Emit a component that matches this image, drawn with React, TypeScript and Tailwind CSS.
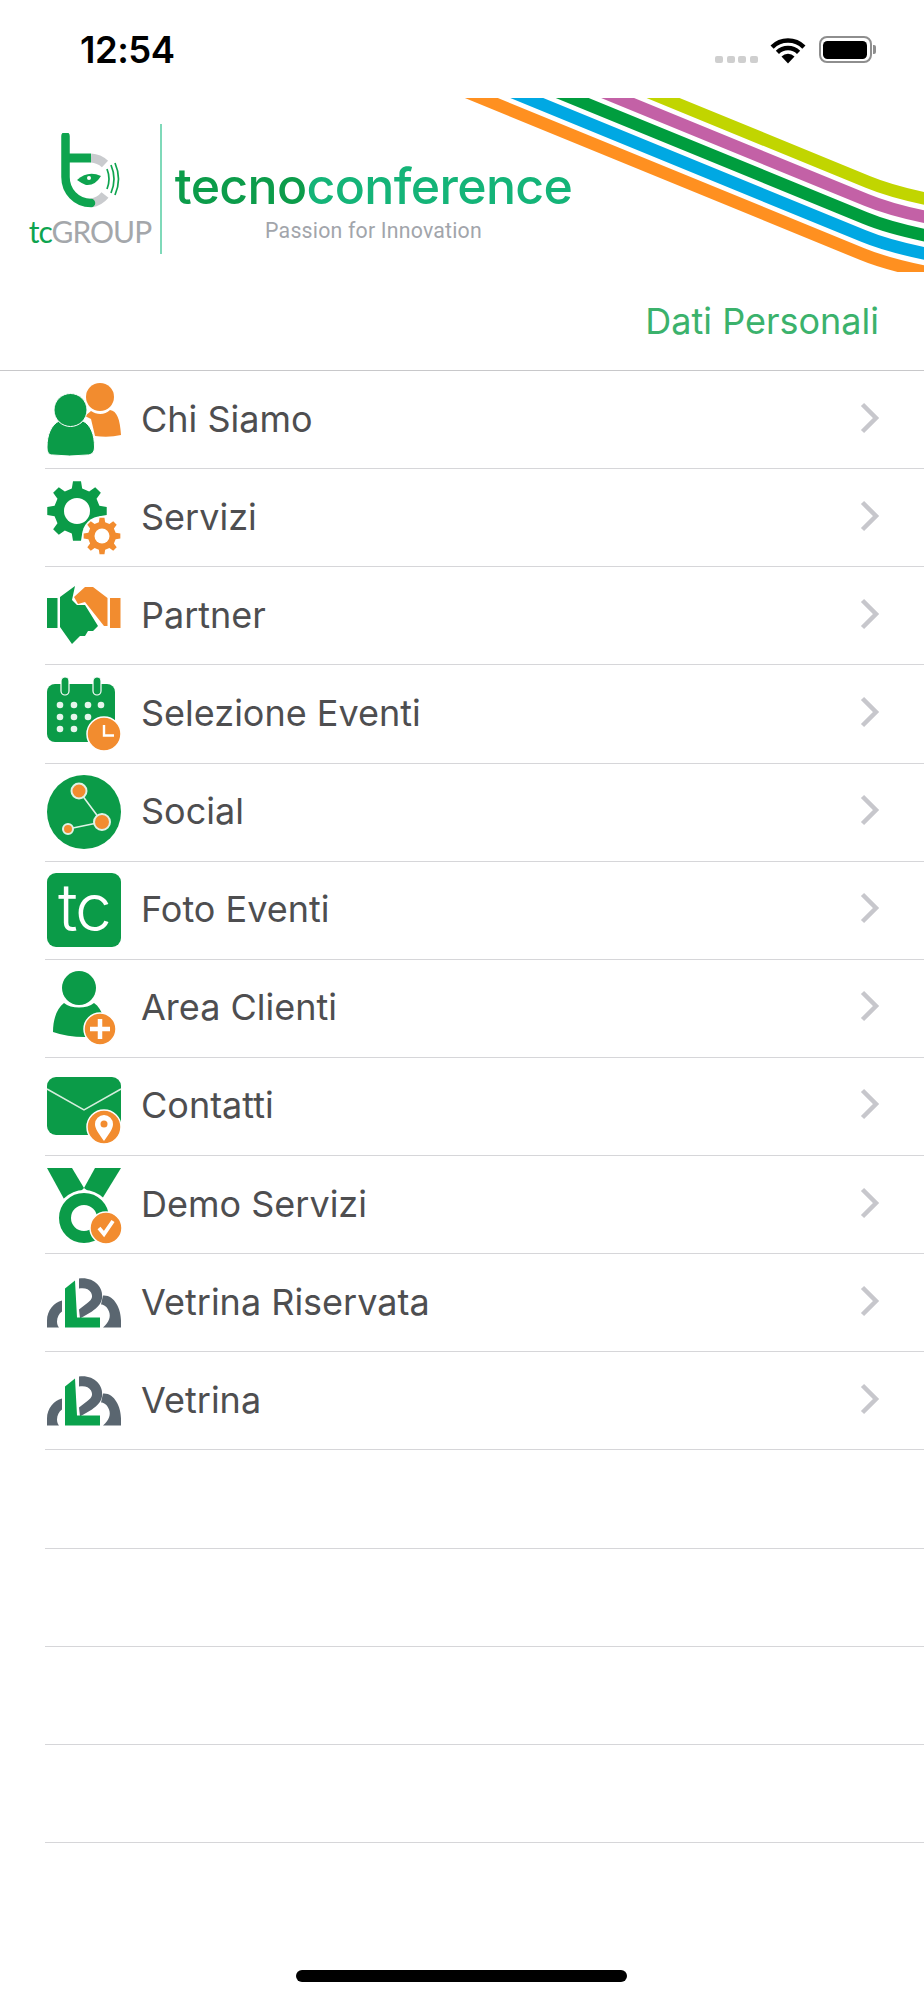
// App.tsx
const GREEN = '#0b9b48'
const ORANGE = '#f28c2f'

function gearPath(cx: number, cy: number, outer: number, inner: number, teeth: number) {
  const pts: string[] = []
  const step = (Math.PI * 2) / teeth
  for (let i = 0; i < teeth; i++) {
    const a = i * step - Math.PI / 2
    const w = step * 0.2
    const seq: [number, number][] = [
      [inner, a - w * 1.45],
      [outer, a - w * 0.85],
      [outer, a + w * 0.85],
      [inner, a + w * 1.45],
    ]
    seq.forEach(([r, t]) => pts.push(`${(cx + r * Math.cos(t)).toFixed(2)} ${(cy + r * Math.sin(t)).toFixed(2)}`))
  }
  return 'M' + pts.join('L') + 'Z'
}

function PeopleIcon() {
  return (
    <>
      <circle cx="53" cy="14" r="14" fill={ORANGE} />
      <path d="M44 28C50 32 58 32 63 27C70 28 73 36 74 52Q62 55 48 53L44 36L38 33Z" fill={ORANGE} />
      <path d="M12 38C18 44 30 44 36 38C44 42 47.500 52 47.500 64C47.500 70 44 72 40 72Q22 74 6 72C2 72 0 70 0 64C0 52 4 42 12 38Z" fill={GREEN} stroke="#fff" strokeWidth="1" />
      <circle cx="23.500" cy="27" r="16.500" fill={GREEN} stroke="#fff" strokeWidth="1" />
    </>
  )
}

function GearsIcon() {
  return (
    <>
      <path d={gearPath(30, 30, 30, 23, 8)} fill={GREEN} />
      <circle cx="30" cy="30" r="13" fill="#fff" />
      <circle cx="55" cy="55" r="20" fill="#fff" />
      <path d={gearPath(55, 55, 18.500, 14, 8)} fill={ORANGE} />
      <circle cx="55" cy="55" r="7.500" fill="#fff" />
    </>
  )
}

function HandshakeIcon() {
  return (
    <g transform="translate(0 6)">
      <rect x="0" y="13" width="10.500" height="30" fill={GREEN} />
      <rect x="63" y="13" width="10.500" height="30" fill={ORANGE} />
      <path d="M13 12L28 1L25 15L30 20H38L51 41L46 46L41 46L38 51L33 51L25 59L13 42Z" fill={GREEN} />
      <path d="M27 12L38 2H46L60.500 13V41H57L38 17L31 19Z" fill={ORANGE} />
    </g>
  )
}

function CalendarIcon() {
  const dots = [
    [13, 28], [27, 28], [41, 28], [54, 28],
    [13, 40], [27, 40], [41, 40],
    [13, 52], [27, 52],
  ]
  return (
    <>
      <rect x="0" y="7" width="68" height="58" rx="8" fill={GREEN} />
      <rect x="14" y="0" width="8" height="18" rx="4" fill={GREEN} stroke="#fff" strokeWidth="1.200" />
      <rect x="46" y="0" width="8" height="18" rx="4" fill={GREEN} stroke="#fff" strokeWidth="1.200" />
      {dots.map(([x, y]) => (
        <circle key={`${x}-${y}`} cx={x} cy={y} r="3.300" fill="#e6f5ec" />
      ))}
      <circle cx="57" cy="57" r="17" fill={ORANGE} stroke="#fff" strokeWidth="1.500" />
      <path d="M57 48V58.500H67" fill="none" stroke="#fff" strokeWidth="2.400" />
    </>
  )
}

function SocialIcon() {
  return (
    <>
      <circle cx="37" cy="37" r="37" fill={GREEN} />
      <path d="M32 16L55 47L21 54" fill="none" stroke="#dff3e6" strokeWidth="1.600" />
      <circle cx="32" cy="16" r="7.500" fill={ORANGE} stroke="#dff3e6" strokeWidth="2" />
      <circle cx="55" cy="47" r="8" fill={ORANGE} stroke="#dff3e6" strokeWidth="2" />
      <circle cx="21" cy="54" r="5" fill={ORANGE} stroke="#dff3e6" strokeWidth="2" />
    </>
  )
}

function TcIcon() {
  return (
    <>
      <rect x="0" y="0" width="74" height="74" rx="9" fill={GREEN} />
      <text x="37" y="58" textAnchor="middle" fontFamily="Inter, sans-serif" fontSize="66" fontWeight="300" letterSpacing="-2" fill="#fff">
        tc
      </text>
    </>
  )
}

function ClientIcon() {
  return (
    <>
      <circle cx="32" cy="17" r="17" fill={GREEN} />
      <path d="M17 32C24 38 40 38 47 32C53 36 57 44 58 56L38 66Q20 66 6 61C6 48 10 37 17 32Z" fill={GREEN} />
      <circle cx="53" cy="58" r="16" fill={ORANGE} stroke="#fff" strokeWidth="1.500" />
      <path d="M53 48V68M43 58H63" stroke="#fff" strokeWidth="4.500" />
    </>
  )
}

function MailIcon() {
  return (
    <>
      <rect x="0" y="8" width="74" height="58" rx="9" fill={GREEN} />
      <path d="M0 20L37 41L74 20" fill="none" stroke="#d5eedd" strokeWidth="1.500" />
      <circle cx="57" cy="58" r="17" fill={ORANGE} stroke="#fff" strokeWidth="1.500" />
      <path d="M57 72C52 65 48 60 48 55A9 9 0 0 1 66 55C66 60 62 65 57 72Z" fill="#fff" />
      <circle cx="57" cy="55" r="3.500" fill={ORANGE} />
    </>
  )
}

function MedalIcon() {
  return (
    <>
      <path d="M0 0H25L37 20L33 24L17 31Z" fill={GREEN} />
      <path d="M48 0H74L55 31L41 23L37 20Z" fill={GREEN} />
      <circle cx="37" cy="50" r="28" fill="#fff" />
      <circle cx="37" cy="50" r="19" fill="none" stroke={GREEN} strokeWidth="12" />
      <circle cx="59" cy="60" r="16" fill={ORANGE} stroke="#fff" strokeWidth="1.500" />
      <path d="M52 60L57 66L66 53" fill="none" stroke="#fff" strokeWidth="3.800" />
    </>
  )
}

function CloudIcon() {
  return (
    <g transform="translate(0 12.500)">
      <path d="M0 49V42C0 32 7 24 15 22V33C12 35 10 39 10 43C10 46 11 48 12 49Z" fill="#5a6670" />
      <path d="M32 0C46 -2 57 8 55 20C54 26 50 29 45 33L33 40L32 31L41 24C45 21 46 18 44 14C42 10 37 9 32 10Z" fill="#5a6670" />
      <path d="M56 17C67 16 74 30 74 42V49H56C62 44 64 38 62 33C60 28 57 26 54 26Z" fill="#5a6670" />
      <path d="M28 2L18 10V49H53V39H30Z" fill="#0aa24c" />
    </g>
  )
}

const rows = [
  { label: 'Chi Siamo', icon: <PeopleIcon /> },
  { label: 'Servizi', icon: <GearsIcon /> },
  { label: 'Partner', icon: <HandshakeIcon /> },
  { label: 'Selezione Eventi', icon: <CalendarIcon /> },
  { label: 'Social', icon: <SocialIcon /> },
  { label: 'Foto Eventi', icon: <TcIcon /> },
  { label: 'Area Clienti', icon: <ClientIcon /> },
  { label: 'Contatti', icon: <MailIcon /> },
  { label: 'Demo Servizi', icon: <MedalIcon /> },
  { label: 'Vetrina Riservata', icon: <CloudIcon /> },
  { label: 'Vetrina', icon: <CloudIcon /> },
]

function Stripes() {
  const colors = ['#c1d500', '#c361a6', '#009d3e', '#00a8e3', '#ff9020']
  return (
    <svg className="absolute left-0 top-0 pointer-events-none" width="924" height="174" viewBox="0 98 924 174">
      {colors.map((c, i) => (
        <path
          key={c}
          d="M380 -18L868 182Q892 192 934 200.500"
          transform={`translate(${-i * 1.5} ${i * 18})`}
          fill="none"
          stroke={c}
          strokeWidth="12.500"
        />
      ))}
    </svg>
  )
}

function GroupMark() {
  return (
    <svg width="62" height="77" viewBox="0 0 62 77" className="block">
      <path d="M32 25A22.500 22.500 0 0 1 46 31" fill="none" stroke="#c9cbce" strokeWidth="9" />
      <path d="M32 70A22.500 22.500 0 0 0 46 62" fill="none" stroke="#c9cbce" strokeWidth="9" />
      <path d="M6.500 3V44C6.500 58 17 70 32 70" fill="none" stroke="#0ea44f" strokeWidth="8.500" strokeLinecap="round" />
      <path d="M6.500 25H32" fill="none" stroke="#0ea44f" strokeWidth="9" />
      <path d="M18 47Q29 37 42 43Q36 53 27 52Q22 50 18 47Z" fill="#0ea44f" />
      <circle cx="30" cy="45" r="2" fill="#fff" />
      <path d="M48 36Q52 46 48 56M52 32Q58 46 52 60M56 30Q63 46 56 62" fill="none" stroke="#0ea44f" strokeWidth="1.700" />
    </svg>
  )
}

export default function App() {
  return (
    <div className="w-[924px] h-[2000px] bg-white flex flex-col font-['Inter',sans-serif] overflow-hidden">
      {/* status bar */}
      <div className="h-[98px] shrink-0 flex items-start">
        <span className="ml-[80px] mt-[31px] text-[36.500px] leading-[38px] font-semibold text-black tracking-[-0.5px] font-['Inter',sans-serif]">12:54</span>
        <div className="ml-auto mr-[48px] flex items-start">
          <div className="flex gap-[3.500px] mt-[56px]">
            <span className="w-[8px] h-[7px] rounded-[2px] bg-[#cfcfcf]" />
            <span className="w-[8px] h-[7px] rounded-[2px] bg-[#cfcfcf]" />
            <span className="w-[8px] h-[7px] rounded-[2px] bg-[#cfcfcf]" />
            <span className="w-[8px] h-[7px] rounded-[2px] bg-[#cfcfcf]" />
          </div>
          <svg width="36" height="27" viewBox="0 0 36 27" className="ml-[12px] mt-[37px]">
            <path d="M18 26.500L11.500 19.500A9.200 9.200 0 0 1 24.500 19.500Z" fill="#000" />
            <path d="M7.400 15.400A15 15 0 0 1 28.600 15.400" fill="none" stroke="#000" strokeWidth="4.500" />
            <path d="M2.100 10.100A22.500 22.500 0 0 1 33.900 10.100" fill="none" stroke="#000" strokeWidth="4.500" />
          </svg>
          <div className="ml-[13px] mt-[36px] flex items-center">
            <div className="w-[53px] h-[27px] rounded-[8px] border-2 border-[#8e8e8e] p-[2.500px]">
              <div className="w-full h-full rounded-[4.500px] bg-black" />
            </div>
            <div className="ml-[1.500px] w-[3px] h-[9px] rounded-r-[2px] bg-[#8e8e8e]" />
          </div>
        </div>
      </div>

      {/* banner */}
      <div className="relative h-[174px] shrink-0 flex items-start">
        <Stripes />
        <div className="ml-[28px] w-[124px] pt-[35px] flex flex-col items-center">
          <GroupMark />
          <div className="mt-[3px] text-[30px] leading-[36px] tracking-[-1px] font-['Lato',sans-serif] whitespace-nowrap">
            <span className="text-[#0ea44f]">tc</span>
            <span className="text-[#a4a7ab]">GROUP</span>
          </div>
        </div>
        <div className="ml-[8px] mt-[26px] w-[2px] h-[130px] bg-[#7fd9b9]" />
        <div className="ml-[14px] mt-[60px] w-[395px] flex flex-col items-center">
          <div className="text-[50px] leading-[56px] font-['Inter',sans-serif] font-medium tracking-[-0.65px] whitespace-nowrap">
            <span className="text-[#0c9c4a]">tecno</span>
            <span className="text-[#14b478]">conference</span>
          </div>
          <div className="text-[21.300px] leading-[24px] text-[#a2a5ab] font-['Roboto',sans-serif] tracking-[0.2px] mt-[5px]">Passion for Innovation</div>
        </div>
      </div>

      {/* dati personali */}
      <div className="h-[99px] shrink-0 border-b border-[#c8c8ca] flex justify-end items-start">
        <button className="mr-[45px] mt-[28px] text-[36px] leading-[42px] text-[#3bb26c]">Dati Personali</button>
      </div>

      {/* menu */}
      <ul className="flex flex-col">
        {rows.map(r => (
          <li key={r.label} className="ml-[45px] h-[98.130px] shrink-0 border-b border-[#d6d6d9] flex items-center">
            <svg width="74" height="74" viewBox="0 0 74 74" className="ml-[1.500px] shrink-0 overflow-visible">
              {r.icon}
            </svg>
            <span className="ml-[20.500px] mb-[2px] text-[36px] leading-[42px] text-[#4e4e50]">{r.label}</span>
            <svg width="20" height="32" viewBox="0 0 20 32" className="ml-auto mr-[44px] mb-[4px]">
              <path d="M2.500 2.500L16 16L2.500 29.500" fill="none" stroke="#c7c7cc" strokeWidth="4.500" />
            </svg>
          </li>
        ))}
        {[0, 1, 2, 3].map(i => (
          <li key={i} className="ml-[45px] h-[98.130px] shrink-0 border-b border-[#d6d6d9]" />
        ))}
      </ul>

      {/* home indicator */}
      <div className="mt-auto mb-[18px] self-center ml-[-1px] w-[331px] h-[12px] rounded-full bg-black shrink-0" />
    </div>
  )
}
